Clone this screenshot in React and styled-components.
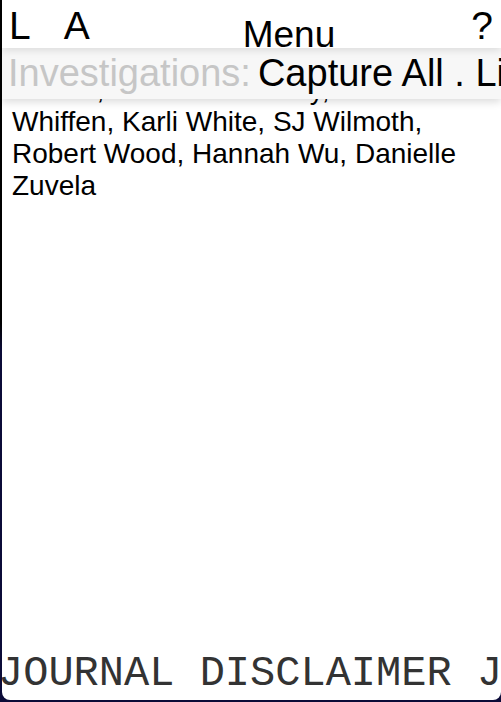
import React from 'react';
import styled, { createGlobalStyle } from 'styled-components';

const GlobalStyle = createGlobalStyle`
  html, body {
    margin: 0;
    padding: 0;
    height: 100%;
    overflow: hidden;
  }

  body {
    background: linear-gradient(#000 0%, #000 46%, #0b0b38 50%, #0b0b38 100%);
    font-family: 'Liberation Sans', Arial, sans-serif;
  }
`;

const names = [
  'Walker, Lauren Whateley, Anne',
  'Whiffen, Karli White, SJ Wilmoth,',
  'Robert Wood, Hannah Wu, Danielle',
  'Zuvela',
];

const App = () => {
  return (
    <>
      <GlobalStyle />
      <Panel>
        <Header>
          <HeaderLetter>L</HeaderLetter>
          <HeaderLetter $gap>A</HeaderLetter>
          <MenuTitle>Menu</MenuTitle>
          <HeaderLetter>?</HeaderLetter>
        </Header>
        <SubBar>
          <Muted>Investigations:</Muted>
          <span>Capture All . Live Feeds . Archive</span>
        </SubBar>
        <Content>
          <Credits>{names.join(' ')}</Credits>
        </Content>
        <Footer>JOURNAL DISCLAIMER JOURNAL DISCLAIMER</Footer>
      </Panel>
    </>
  );
};

export default App;

const Panel = styled.div`
  margin-left: 2px;
  height: 700px;
  background: #fff;
  border-bottom-left-radius: 8px;
  border-bottom-right-radius: 8px;
  display: flex;
  flex-direction: column;
  overflow: hidden;
`;

const Header = styled.div`
  position: relative;
  z-index: 3;
  height: 48px;
  display: flex;
  align-items: flex-start;
  padding: 0 8px 0 7px;
  background: #fff;
  color: #000;
  box-shadow: 0 2px 8px rgba(0, 0, 0, 0.12);
`;

const HeaderLetter = styled.div`
  font-size: 39px;
  line-height: 39px;
  padding-top: 6px;
  margin-left: ${(p) => (p.$gap ? '33px' : '0')};
`;

const MenuTitle = styled.div`
  flex: 1;
  text-align: center;
  font-size: 37px;
  line-height: 37px;
  padding-top: 16px;
  margin-left: 17px;
`;

const SubBar = styled.div`
  position: relative;
  z-index: 2;
  height: 51px;
  padding-left: 6px;
  background: #f7f7f7;
  box-shadow: 0 3px 8px rgba(0, 0, 0, 0.14);
  font-size: 38px;
  line-height: 51px;
  white-space: nowrap;
  overflow: hidden;
  color: #000;
`;

const Muted = styled.span`
  color: #c6c6c6;
  margin-right: 7px;
`;

const Content = styled.div`
  flex: 1;
  overflow: hidden;
  padding: 0 10px;
`;

const Credits = styled.p`
  margin: -25px 0 0 0;
  font-size: 28px;
  line-height: 32px;
  color: #000;
`;

const Footer = styled.div`
  font-family: 'Liberation Mono', 'Courier New', monospace;
  font-size: 42px;
  line-height: 50px;
  padding: 0 0 1px 0;
  text-indent: -4px;
  white-space: nowrap;
  overflow: hidden;
  color: #333;
`;
